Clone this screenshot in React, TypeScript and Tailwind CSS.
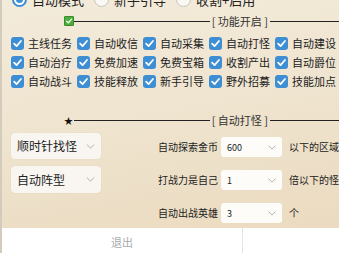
import React from "react";

const FONT = { fontFamily: '"Noto Sans CJK SC", "Noto Sans", sans-serif' };

function BlueCheck() {
  return (
    <span className="flex h-[13px] w-[13px] shrink-0 items-center justify-center rounded-[3px] bg-[#3d8ed3]">
      <svg viewBox="0 0 12 12" className="h-[11px] w-[11px]">
        <path d="M2.3 6.2 L5 8.8 L9.8 3.3" fill="none" stroke="white" strokeWidth="1.9" strokeLinecap="round" strokeLinejoin="round" />
      </svg>
    </span>
  );
}

function Chevron({ cls }: { cls: string }) {
  return (
    <svg viewBox="0 0 10 6" className={cls}>
      <path d="M1 1 L5 5 L9 1" fill="none" stroke="#a9a9a9" strokeWidth="1.1" strokeLinecap="round" strokeLinejoin="round" />
    </svg>
  );
}

const items = [
  "主线任务", "自动收信", "自动采集", "自动打怪", "自动建设",
  "自动治疗", "免费加速", "免费宝箱", "收割产出", "自动爵位",
  "自动战斗", "技能释放", "新手引导", "野外招募", "技能加点",
];

function Header({ icon, title }: { icon: React.ReactNode; title: string }) {
  return (
    <div className="flex h-[10px] items-center pl-[62px]">
      {icon}
      <div className="h-px flex-1 bg-[#222]" />
      <span className="px-[2px] text-[11px] leading-none text-[#333] whitespace-nowrap">[ {title} ]</span>
      <div className="h-px w-[69px] bg-[#222]" />
    </div>
  );
}

function Radio({ on, label }: { on: boolean; label: string }) {
  return (
    <div className="flex items-center gap-[5px]">
      {on ? (
        <span className="flex h-[15px] w-[15px] items-center justify-center rounded-full bg-[#3d8ed3]">
          <span className="flex h-[11px] w-[11px] items-center justify-center rounded-full bg-white">
            <span className="h-[7px] w-[7px] rounded-full bg-[#3d8ed3]" />
          </span>
        </span>
      ) : (
        <span className="h-[15px] w-[15px] rounded-full border border-[#c9c4bb] bg-[#faf8f4]" />
      )}
      <span className="text-[13px] leading-none text-[#222] whitespace-nowrap">{label}</span>
    </div>
  );
}

function RightRow({ label, value, suffix }: { label: string; value: string; suffix: string }) {
  return (
    <div className="flex h-[20px] items-center">
      <span className="w-[63px] text-[10px] leading-none text-[#222] whitespace-nowrap">{label}</span>
      <div className="flex h-[20px] w-[61px] items-center justify-between rounded-[3px] bg-[#fdfcf9] pl-[6px] pr-[6px]">
        <span className="text-[9px] leading-none text-[#222]">{value}</span>
        <Chevron cls="h-[5px] w-[8px]" />
      </div>
      <span className="ml-[7px] text-[10px] leading-none text-[#222] whitespace-nowrap">{suffix}</span>
    </div>
  );
}

export default function App() {
  return (
    <div
      className="relative flex h-[253px] w-[339px] flex-col overflow-hidden border-l-2 border-[#d3cbbb] bg-[linear-gradient(170deg,#f3ebdb_0%,#efe4cf_45%,#ead9bd_100%)]"
      style={FONT}
    >
      <div className="mt-[-9px] flex h-[16px] items-center gap-[10px] pl-[10px]">
        <Radio on label="自动模式" />
        <Radio on={false} label="新手引导" />
        <Radio on={false} label="收割+启用" />
      </div>

      <div className="mt-[9px]">
        <Header
          title="功能开启"
          icon={
            <span className="flex h-[10px] w-[10px] items-center justify-center rounded-[1px] border border-[#3a8a2e] bg-[#4caf3c]">
              <svg viewBox="0 0 10 10" className="h-[8px] w-[8px]">
                <path d="M2 5.2 L4.2 7.4 L8.2 2.6" fill="none" stroke="white" strokeWidth="1.6" strokeLinecap="round" strokeLinejoin="round" />
              </svg>
            </span>
          }
        />
      </div>

      <div className="mt-[8px] grid grid-cols-[repeat(5,66px)] pl-[9px]">
        {items.map((t) => (
          <div key={t} className="flex h-[19px] items-center gap-[4px]">
            <BlueCheck />
            <span className="text-[11px] leading-none text-[#222] whitespace-nowrap">{t}</span>
          </div>
        ))}
      </div>

      <div className="mt-[24px]">
        <Header title="自动打怪" icon={<span className="mr-[1px] text-[9px] leading-none text-[#111]">★</span>} />
      </div>

      <div className="flex">
        <div className="ml-[9px] mt-[8px] flex w-[96px] flex-col gap-[7px]">
          <div className="flex h-[26px] items-center justify-between rounded-[4px] bg-[#f9f6f1] pl-[6px] pr-[6px] shadow-[0_0_1px_rgba(0,0,0,0.15)]">
            <span className="text-[12px] leading-none text-[#222]">顺时针找怪</span>
            <Chevron cls="h-[5px] w-[9px]" />
          </div>
          <div className="flex h-[27px] items-center justify-between rounded-[4px] bg-[#f9f6f1] pl-[6px] pr-[6px] shadow-[0_0_1px_rgba(0,0,0,0.15)]">
            <span className="text-[12px] leading-none text-[#222]">自动阵型</span>
            <Chevron cls="h-[5px] w-[9px]" />
          </div>
        </div>
        <div className="ml-[57px] mt-[12px] flex flex-col gap-[13px]">
          <RightRow label="自动探索金币" value="600" suffix="以下的区域" />
          <RightRow label="打战力是自己" value="1" suffix="倍以下的怪" />
          <RightRow label="自动出战英雄" value="3" suffix="个" />
        </div>
      </div>

      <div className="mt-auto flex h-[25px] bg-white">
        <div className="flex w-[241px] justify-center border-r border-[#e4e4e4] pt-[9px]">
          <span className="text-[11px] leading-none text-[#aaa]">退出</span>
        </div>
        <div className="flex-1" />
      </div>
    </div>
  );
}
